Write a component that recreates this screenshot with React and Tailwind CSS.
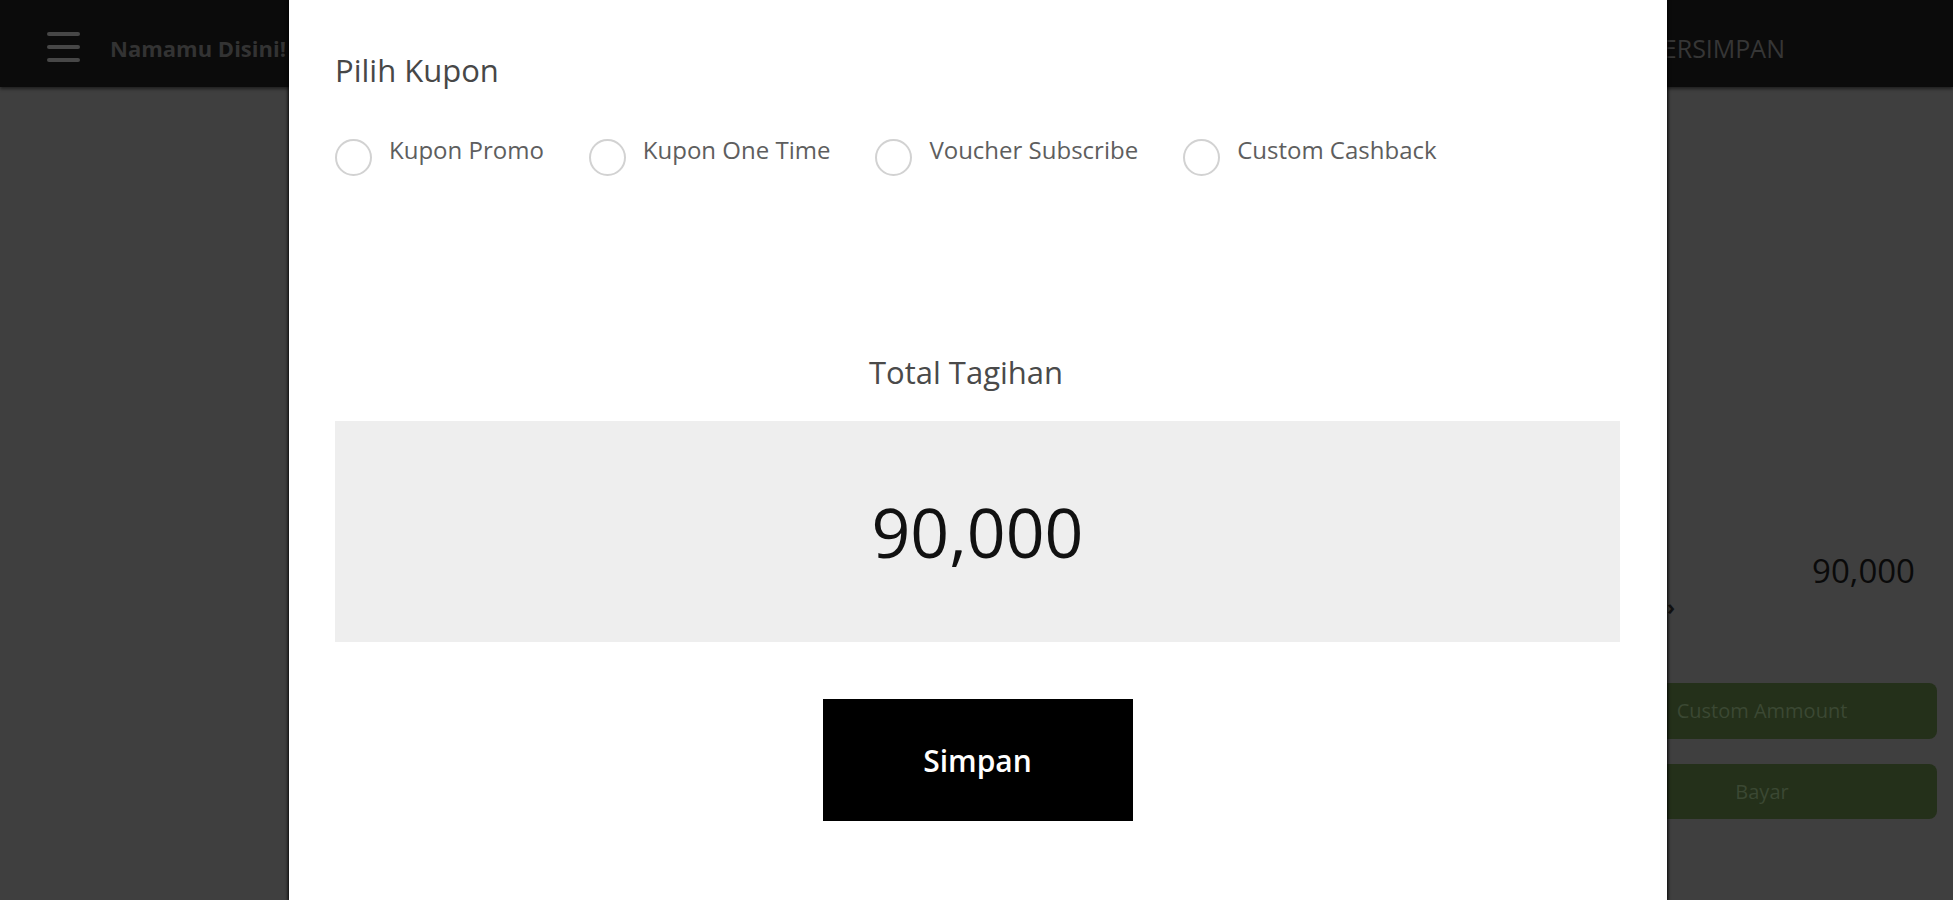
import { useState } from "react";

const COUPONS = ["Kupon Promo", "Kupon One Time", "Voucher Subscribe", "Custom Cashback"];

function CouponModal() {
  const [picked, setPicked] = useState(null);

  return (
    <div className="absolute top-0 left-[289px] h-full w-[1378px] bg-white pl-[46px] pr-[47px] pt-[49px] shadow-[0_0_3px_1px_rgba(0,0,0,0.9)]">
      <h2 className="text-[31px] leading-[42px] text-[#474747]">Pilih Kupon</h2>

      {/* jenis kupon */}
      <div className="mt-[43px] flex items-start gap-[45px]">
        {COUPONS.map((c) => (
          <label key={c} onClick={() => setPicked(c)} className="flex cursor-pointer items-start gap-[17px]">
            <span className={`mt-[5px] h-[37px] w-[37px] shrink-0 rounded-full border-2 ${picked === c ? "border-[#111] bg-[radial-gradient(circle,#111_35%,transparent_40%)]" : "border-[#d2d2d2]"}`} />
            <span className="text-[24px] leading-[31px] text-[#5e5e5e]">{c}</span>
          </label>
        ))}
      </div>

      <p className="mt-[175px] pr-[23px] text-center text-[31px] leading-[42px] text-[#4a4a4a]">Total Tagihan</p>

      <div className="mt-[28px] flex h-[221px] items-center justify-center bg-[#eeeeee]">
        <span className="text-[68px] leading-[93px] text-[#111]">90,000</span>
      </div>

      <div className="mt-[57px] flex justify-center">
        <button className="h-[122px] w-[310px] bg-black text-[30px] font-semibold text-white">Simpan</button>
      </div>
    </div>
  );
}

export default function App() {
  return (
    <div className="relative h-[900px] w-full overflow-hidden bg-[#3f3f3f] font-['Open_Sans','Noto_Sans',sans-serif]">
      <header className="flex h-[87px] items-center justify-between bg-[#0b0b0b] pl-[47px] pr-[168px] pt-[6px] shadow-[0_2px_3px_rgba(0,0,0,0.5)]">
        <div className="flex items-center gap-[30px]">
          <div className="flex w-[33px] flex-col gap-[9px]">
            <span className="h-[4px] rounded-sm bg-[#474747]" />
            <span className="h-[4px] rounded-sm bg-[#474747]" />
            <span className="h-[4px] rounded-sm bg-[#474747]" />
          </div>
          <span className="mt-[4px] text-[22px] font-bold text-[#333]">Namamu Disini!</span>
        </div>
        <span className="mt-[4px] text-[25px] text-[#363636]">TERSIMPAN</span>
      </header>

      {/* kolom kanan (di bawah modal) */}
      <div className="flex justify-end pr-[16px]">
        <aside className="w-[350px] pt-[461px]">
          <div className="flex justify-between pr-[22px]">
            <span className="text-[22px] leading-[45px] text-[#111]">Total</span>
            <span className="text-[33px] leading-[45px] text-[#0a0a0a]">90,000</span>
          </div>
          <div className="pl-[80px] text-[22px] font-bold leading-[27px] text-[#111]">›</div>
          <div className="mt-[63px] flex flex-col gap-[25px]">
            <button className="h-[56px] rounded-[8px] bg-[#24301a] text-[20px] text-[#3b4833]">Custom Ammount</button>
            <button className="h-[55px] rounded-[8px] bg-[#24301a] text-[20px] text-[#3b4833]">Bayar</button>
          </div>
        </aside>
      </div>

      <CouponModal />
    </div>
  );
}
